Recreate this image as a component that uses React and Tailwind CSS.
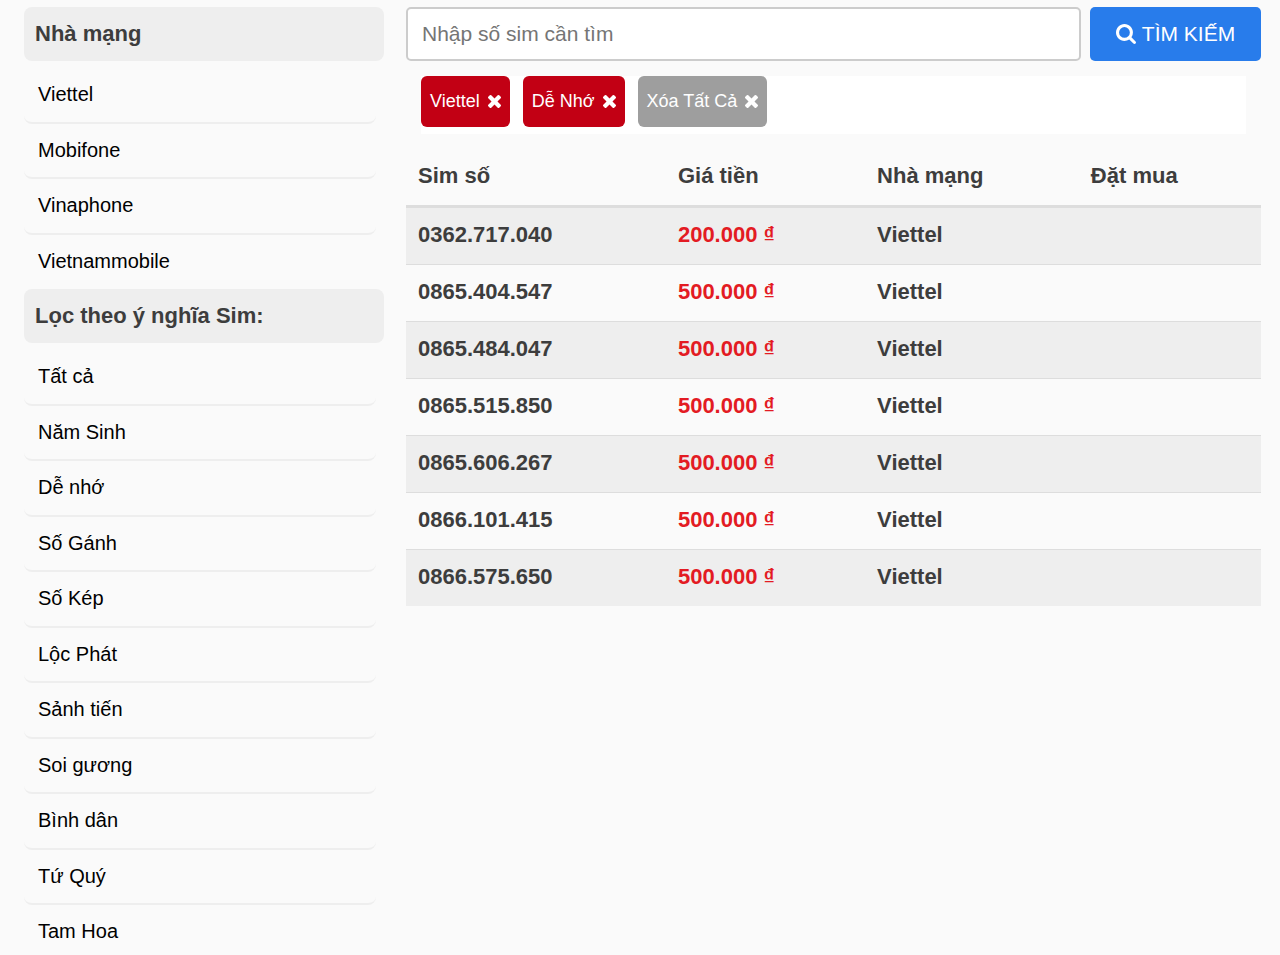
import React, { useState } from 'react';

const NETWORKS = ['Viettel', 'Mobifone', 'Vinaphone', 'Vietnammobile'];

const MEANINGS = [
  'Tất cả',
  'Năm Sinh',
  'Dễ nhớ',
  'Số Gánh',
  'Số Kép',
  'Lộc Phát',
  'Sảnh tiến',
  'Soi gương',
  'Bình dân',
  'Tứ Quý',
  'Tam Hoa',
];

const SIMS = [
  { number: '0362.717.040', price: '200.000', network: 'Viettel' },
  { number: '0865.404.547', price: '500.000', network: 'Viettel' },
  { number: '0865.484.047', price: '500.000', network: 'Viettel' },
  { number: '0865.515.850', price: '500.000', network: 'Viettel' },
  { number: '0865.606.267', price: '500.000', network: 'Viettel' },
  { number: '0866.101.415', price: '500.000', network: 'Viettel' },
  { number: '0866.575.650', price: '500.000', network: 'Viettel' },
];

const SearchIcon = ({ className }) => (
  <svg viewBox="64 128 1664 1664" fill="currentColor" className={className} aria-hidden="true">
    <path d="M1216 832q0-185-131.5-316.5t-316.5-131.5-316.5 131.5-131.5 316.5 131.5 316.5 316.5 131.5 316.5-131.5 131.5-316.5zm512 832q0 52-38 90t-90 38q-54 0-90-38l-343-342q-179 124-399 124-143 0-273.5-55.5t-225-150-150-225-55.5-273.5 55.5-273.5 150-225 225-150 273.5-55.5 273.5 55.5 225 150 150 225 55.5 273.5q0 220-124 399l343 343q37 37 37 90z" />
  </svg>
);

const TimesIcon = ({ className }) => (
  <svg viewBox="302 366 1188 1188" fill="currentColor" className={className} aria-hidden="true">
    <path d="M1490 1322q0 40-28 68l-136 136q-28 28-68 28t-68-28l-294-294-294 294q-28 28-68 28t-68-28l-136-136q-28-28-28-68t28-68l294-294-294-294q-28-28-28-68t28-68l136-136q28-28 68-28t68 28l294 294 294-294q28-28 68-28t68 28l136 136q28 28 28 68t-28 68l-294 294 294 294q28 28 28 68z" />
  </svg>
);

const FilterGroup = ({ title, items }) => (
  <section>
    <h2 className="h-[54px] rounded-lg bg-[#eeeeee] pl-[11px] text-[22px] leading-[53px] font-bold text-[#3d3d3d]">
      {title}
    </h2>
    <ul className="mt-[7px] mr-2">
      {items.map((item) => (
        <li
          key={item}
          className="h-[56px] rounded-lg border-b-2 border-[#eeeeee] even:h-[55px] last:border-b-0 last:even:h-[54px]"
        >
          <a href="#" className="block pl-[14px] text-[20px] leading-[53px] text-black">
            {item}
          </a>
        </li>
      ))}
    </ul>
  </section>
);

const Chip = ({ label, color, onClick }) => (
  <button
    type="button"
    onClick={onClick}
    className={`flex h-[51px] items-center gap-2 rounded-md px-[9px] text-[18px] text-white ${color}`}
  >
    {label}
    <TimesIcon className="h-[13px] w-[13px]" />
  </button>
);

export default function App() {
  const [query, setQuery] = useState('');
  const [filters, setFilters] = useState(['Viettel', 'Dễ Nhớ']);

  const removeFilter = (name) => setFilters(filters.filter((f) => f !== name));

  return (
    <div className="flex h-screen items-start gap-[22px] overflow-hidden bg-[#fafafa] pt-[7px] pr-[19px] pl-6 font-['Liberation_Sans',Arial,sans-serif]">
      {/* Filters */}
      <aside className="w-[360px] shrink-0">
        <FilterGroup title="Nhà mạng" items={NETWORKS} />
        <FilterGroup title="Lọc theo ý nghĩa Sim:" items={MEANINGS} />
      </aside>

      <main className="min-w-0 flex-1">
        {/* Search */}
        <form className="flex gap-[9px]" onSubmit={(e) => e.preventDefault()}>
          <input
            type="text"
            aria-label="Nhập số sim cần tìm"
            placeholder="Nhập số sim cần tìm"
            value={query}
            onChange={(e) => setQuery(e.target.value)}
            className="h-[54px] min-w-0 flex-1 rounded-[5px] border-2 border-[#cccccc] bg-white px-[14px] text-[21px] text-black placeholder:text-[#757575]"
          />
          <button
            type="submit"
            className="flex h-[54px] w-[171px] items-center justify-center gap-[6px] rounded-[5px] bg-[#287ceb] text-[21px] text-white"
          >
            <SearchIcon className="h-5 w-5" />
            TÌM KIẾM
          </button>
        </form>

        {/* Active filters */}
        <div className="mx-[15px] mt-[15px] flex gap-[13px] bg-white pb-[7px]">
          {filters.map((name) => (
            <Chip key={name} label={name} color="bg-[#c20014]" onClick={() => removeFilter(name)} />
          ))}
          <Chip label="Xóa Tất Cả" color="bg-[#9e9e9e]" onClick={() => setFilters([])} />
        </div>

        {/* Results */}
        <table className="mt-[14px] w-full table-fixed border-separate border-spacing-0 text-left text-[22px] font-bold text-[#3d3d3d]">
          <thead>
            <tr className="h-[60px] *:border-b-3 *:border-[#dddddd] *:px-3 *:pb-[2px]">
              <th className="w-[30.4%]">Sim số</th>
              <th className="w-[23.3%]">Giá tiền</th>
              <th className="w-[25%]">Nhà mạng</th>
              <th>Đặt mua</th>
            </tr>
          </thead>
          <tbody>
            {SIMS.map((sim) => (
              <tr
                key={sim.number}
                className="h-[57px] odd:bg-[#eeeeee] *:border-b *:border-[#dddddd] *:px-3 *:pb-[3px] last:odd:h-[56px] last:*:border-b-0"
              >
                <td>{sim.number}</td>
                <td className="text-[#e31b23]">{sim.price} ₫</td>
                <td>{sim.network}</td>
                <td></td>
              </tr>
            ))}
          </tbody>
        </table>
      </main>
    </div>
  );
}
